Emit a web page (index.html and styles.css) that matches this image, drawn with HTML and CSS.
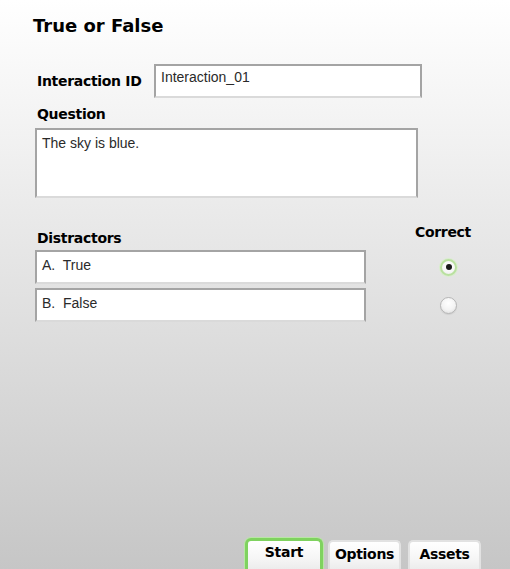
FILE: index.html
```html
<!DOCTYPE html>
<html>
<head>
<meta charset="utf-8">
<link rel="stylesheet" href="styles.css">
</head>
<body>
<div class="page">
  <h1 class="title">True or False</h1>
  <div class="id-row">
    <div class="label id-label">Interaction ID</div>
    <div class="field id-field">Interaction_01</div>
  </div>
  <div class="label q-label">Question</div>
  <div class="field q-field">The sky is blue.</div>
  <div class="dist-head">
    <div class="label">Distractors</div>
    <div class="label correct-label">Correct</div>
  </div>
  <div class="opt-row">
    <div class="field opt-field">A.&nbsp; True</div>
    <div class="radio-cell"><span class="radio checked"></span></div>
  </div>
  <div class="opt-row">
    <div class="field opt-field">B.&nbsp; False</div>
    <div class="radio-cell"><span class="radio"></span></div>
  </div>
  <div class="tabs">
    <div class="tab active">Start</div>
    <div class="tab tab-options">Options</div>
    <div class="tab tab-assets">Assets</div>
  </div>
</div>
</body>
</html>
```
FILE: styles.css
```css
html, body {
  margin: 0;
  padding: 0;
  height: 100%;
}
body {
  background: linear-gradient(to bottom, #ffffff 0%, #f1f1f1 25%, #dadada 65%, #c6c6c6 100%);
  font-family: "DejaVu Sans", Verdana, sans-serif;
  color: #000;
  overflow: hidden;
}
.page {
  height: 569px;
  display: flex;
  flex-direction: column;
  padding-left: 33px;
  box-sizing: border-box;
}
.title {
  margin: 15px 0 0 0;
  font-size: 18px;
  font-weight: bold;
  line-height: 22px;
  letter-spacing: 0;
}
.label {
  font-size: 14px;
  font-weight: bold;
  line-height: 16px;
  letter-spacing: -0.3px;
}
.id-row {
  display: flex;
  align-items: flex-start;
  margin-top: 27px;
}
.id-label {
  margin-left: 4px;
  margin-top: 9px;
  width: 117px;
  flex-shrink: 0;
}
.field {
  background: #fff;
  border: 2px solid #a4a4a4;
  border-bottom: 2px solid #dadada;
  box-sizing: border-box;
  font-family: "Liberation Sans", Arial, sans-serif;
  font-size: 14px;
  line-height: 16px;
  color: #2a2a2a;
  padding: 3px 5px;
  flex-shrink: 0;
}
.id-field {
  width: 268px;
  height: 34px;
}
.q-label {
  margin-left: 4px;
  margin-top: 8px;
}
.q-field {
  margin-left: 2px;
  margin-top: 6px;
  width: 383px;
  height: 70px;
  padding-top: 5px;
}
.dist-head {
  display: flex;
  justify-content: space-between;
  align-items: flex-start;
  margin-top: 26px;
  margin-left: 4px;
  width: 434px;
}
.dist-head .label:first-child {
  margin-top: 6px;
}
.opt-row {
  display: flex;
  align-items: center;
  margin-left: 2px;
  margin-top: 4px;
}
.opt-field {
  width: 331px;
  height: 34px;
  padding: 5px 5px;
}
.radio-cell {
  width: 120px;
  flex-shrink: 0;
  display: flex;
  justify-content: flex-start;
  padding-left: 74px;
  box-sizing: border-box;
}
.radio {
  display: block;
  width: 17px;
  height: 17px;
  border-radius: 50%;
  box-sizing: border-box;
  border: 1px solid #b5b5b5;
  background: radial-gradient(circle at 50% 35%, #ffffff 0%, #f3f3f3 55%, #dadada 100%);
  box-shadow: 0 1px 1px rgba(0,0,0,0.08);
  position: relative;
}
.radio.checked {
  border: 2px solid #b9e19f;
  box-shadow: 0 0 0 1px #d9eecd;
  background: radial-gradient(circle at 50% 40%, #ffffff 0%, #f6f6f6 60%, #e4e4e4 100%);
}
.radio.checked::after {
  content: "";
  position: absolute;
  left: 50%;
  top: 50%;
  width: 6px;
  height: 6px;
  margin: -3px 0 0 -3px;
  border-radius: 50%;
  background: #1a1a1a;
}
.tabs {
  margin-top: auto;
  display: flex;
  align-items: flex-end;
  margin-left: 212px;
  gap: 5px;
  height: 31px;
}
.tab {
  box-sizing: border-box;
  height: 29px;
  width: 73px;
  border: 2px solid #e2e2e2;
  border-bottom: none;
  border-radius: 5px 5px 0 0;
  background: linear-gradient(to bottom, #ffffff 0%, #f6f6f6 60%, #ececec 100%);
  font-size: 14px;
  font-weight: bold;
  text-align: center;
  line-height: 16px;
  padding-top: 4px;
  letter-spacing: -0.3px;
}
.tab.active {
  width: 78px;
  height: 31px;
  border: 3px solid #7fd25f;
  border-bottom: none;
  border-radius: 6px 6px 0 0;
  padding-top: 3px;
  box-shadow: 0 0 0 1px #b8e6a4;
}
.tab-assets {
  margin-left: 2px;
}
```
